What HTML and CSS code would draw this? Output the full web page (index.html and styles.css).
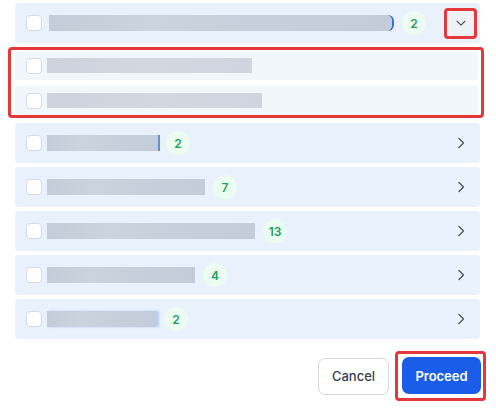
FILE: index.html
```html
<!DOCTYPE html>
<html>
<head>
<meta charset="utf-8">
<link rel="stylesheet" href="styles.css">
</head>
<body>
<div class="panel">
  <div class="row row-open">
    <span class="check"></span>
    <span class="blur blur-first" style="width:343px"></span>
    <span class="badge">2</span>
    <span class="spacer"></span>
    <span class="toggle">
      <svg width="14" height="14" viewBox="0 0 16 16"><path d="M3.5 6l4.5 4.5L12.5 6" fill="none" stroke="#4b5563" stroke-width="1.3" stroke-linecap="round" stroke-linejoin="round"/></svg>
    </span>
  </div>
  <div class="sublist">
    <div class="subrow"><span class="check"></span><span class="blur blur-sub" style="width:205px"></span></div>
    <div class="subrow"><span class="check"></span><span class="blur blur-sub" style="width:215px"></span></div>
  </div>
  <div class="row"><span class="check"></span><span class="blur blur-link" style="width:111px"></span><span class="badge">2</span><span class="spacer"></span><svg class="chev" width="16" height="16" viewBox="0 0 16 16"><path d="M6 3.5l4.5 4.5L6 12.5" fill="none" stroke="#4b5563" stroke-width="1.3" stroke-linecap="round" stroke-linejoin="round"/></svg></div>
  <div class="row"><span class="check"></span><span class="blur" style="width:158px"></span><span class="badge">7</span><span class="spacer"></span><svg class="chev" width="16" height="16" viewBox="0 0 16 16"><path d="M6 3.5l4.5 4.5L6 12.5" fill="none" stroke="#4b5563" stroke-width="1.3" stroke-linecap="round" stroke-linejoin="round"/></svg></div>
  <div class="row"><span class="check"></span><span class="blur" style="width:208px"></span><span class="badge">13</span><span class="spacer"></span><svg class="chev" width="16" height="16" viewBox="0 0 16 16"><path d="M6 3.5l4.5 4.5L6 12.5" fill="none" stroke="#4b5563" stroke-width="1.3" stroke-linecap="round" stroke-linejoin="round"/></svg></div>
  <div class="row"><span class="check"></span><span class="blur" style="width:148px"></span><span class="badge">4</span><span class="spacer"></span><svg class="chev" width="16" height="16" viewBox="0 0 16 16"><path d="M6 3.5l4.5 4.5L6 12.5" fill="none" stroke="#4b5563" stroke-width="1.3" stroke-linecap="round" stroke-linejoin="round"/></svg></div>
  <div class="row"><span class="check"></span><span class="blur blur-faint" style="width:109px"></span><span class="badge">2</span><span class="spacer"></span><svg class="chev" width="16" height="16" viewBox="0 0 16 16"><path d="M6 3.5l4.5 4.5L6 12.5" fill="none" stroke="#4b5563" stroke-width="1.3" stroke-linecap="round" stroke-linejoin="round"/></svg></div>
  <div class="footer">
    <button class="btn btn-cancel">Cancel</button>
    <span class="highlight"><button class="btn btn-primary">Proceed</button></span>
  </div>
</div>
</body>
</html>
```

FILE: styles.css
```css
html, body {
  margin: 0;
  padding: 0;
  background: #ffffff;
  font-family: Inter, "Noto Sans", "Liberation Sans", sans-serif;
}
.panel {
  display: flex;
  flex-direction: column;
  padding: 3px 16px 0 15px;
}
.row {
  display: flex;
  align-items: center;
  height: 40px;
  background: #e8f1fc;
  border-radius: 4px;
  padding: 0 11px 0 11px;
  margin-bottom: 4px;
  box-sizing: border-box;
}
.row-open {
  padding-right: 3px;
  margin-bottom: 4px;
}
.check {
  flex: none;
  width: 16px;
  height: 16px;
  box-sizing: border-box;
  background: #ffffff;
  border: 1px solid #d5dbe3;
  border-radius: 4px;
}
.blur {
  flex: none;
  height: 16px;
  margin-left: 5px;
  background: linear-gradient(90deg, #c3ccd8 0%, #cbd3de 30%, #c6cfdb 60%, #c3ccd8 100%);
}
.blur-first {
  margin-left: 7px;
  border-radius: 0 6px 6px 0;
  box-shadow: 2px 0 0 0 #3b6fd8;
}
.blur-link {
  box-shadow: 2px 0 0 0 #5b8fe0;
}
.blur-faint {
  box-shadow: 3px 0 2px 0 #b8cdf0;
}
.blur-sub {
  height: 15px;
  background: linear-gradient(90deg, #cdd3dc 0%, #d2d8e0 50%, #cfd5de 100%);
}
.badge {
  flex: none;
  min-width: 24px;
  height: 24px;
  padding: 0 2px;
  box-sizing: border-box;
  margin-left: 8px;
  border-radius: 12px;
  background: #edfcf1;
  color: #1e9f5a;
  font-size: 12px;
  font-weight: 600;
  display: flex;
  align-items: center;
  justify-content: center;
}
.row-open .badge {
  margin-left: 10px;
}
.spacer {
  flex: 1;
}
.toggle {
  flex: none;
  width: 33px;
  height: 31px;
  box-sizing: border-box;
  border: 3px solid #e5383b;
  border-radius: 4px;
  background: #eef2f7;
  display: flex;
  align-items: center;
  justify-content: center;
}
.chev {
  flex: none;
}
.sublist {
  display: flex;
  flex-direction: column;
  gap: 6px;
  border: 3px solid #e5383b;
  border-radius: 4px;
  padding: 1px 3px 0 4px;
  margin: 0 -4px 5px -7px;
  height: 71px;
  box-sizing: border-box;
}
.subrow {
  display: flex;
  align-items: center;
  height: 29px;
  flex: none;
  background: #f1f6fa;
  border-radius: 3px;
  padding-left: 11px;
}
.footer {
  display: flex;
  justify-content: flex-end;
  align-items: center;
  gap: 6px;
  margin: 8px -6px 0 0;
}
.btn {
  font-family: Inter, "Noto Sans", "Liberation Sans", sans-serif;
  font-size: 13px;
  height: 37px;
  border-radius: 7px;
  cursor: pointer;
}
.btn-cancel {
  width: 71px;
  background: #ffffff;
  border: 1px solid #d3d8df;
  color: #374151;
  font-weight: 500;
}
.highlight {
  display: flex;
  border: 3px solid #e5383b;
  border-radius: 4px;
  padding: 3px 2px 4px 4px;
}
.btn-primary {
  width: 79px;
  background: #1a5de8;
  border: none;
  color: #ffffff;
  font-weight: 600;
}
```
